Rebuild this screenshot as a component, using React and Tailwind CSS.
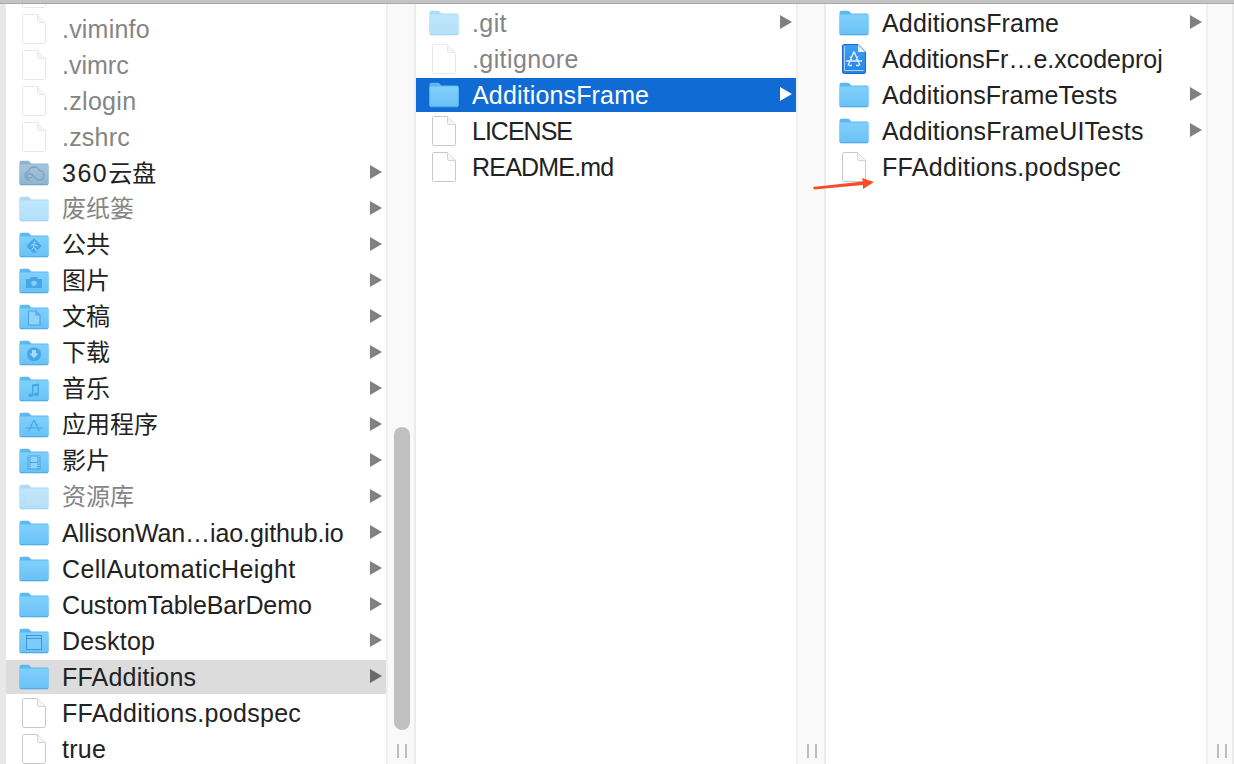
const FONT = 'font-["Liberation_Sans","Noto_Sans_CJK_SC",sans-serif]';

function Glyph({ type }) {
  const c = "#46a6e7";
  switch (type) {
    case "cloud":
      return <path d="M11 20c-3.200 0-5-2-5-4.300 0-2.200 1.600-3.800 3.600-4 .6-2.900 2.900-4.700 5.600-4.700 2.500 0 4.500 1.500 5.300 3.700 2.500 0 4.500 2 4.500 4.600 0 2.700-2 4.700-4.500 4.700-4.500 0-6-6.500-10-6.500-1.700 0-2.800 1-2.800 2.200 0 1.300 1.100 2.200 2.800 2.200 1.600 0 2.600-.8 3.500-1.800" fill="none" stroke="#7ba3c2" strokeWidth="1.300" />;
    case "public":
      return <g><rect x="9.500" y="8.500" width="11" height="11" rx="1.500" transform="rotate(45 15 14)" fill={c} /><circle cx="15.500" cy="10.500" r="1" fill="#a5dcfb" /><path d="M12 13.500l3-1.500 2 1.500 2 .5M15 12.500l-.5 3-2 2.500M14.500 15.500l2.500 1.500v2" stroke="#a5dcfb" strokeWidth="1" fill="none" /></g>;
    case "camera":
      return <g><path d="M7 11h4l1-2h6l1 2h4v9H7z" fill={c} /><circle cx="15" cy="15.300" r="3.200" fill="#86cef8" stroke={c} /></g>;
    case "doc":
      return <path d="M9.500 7h7.500l4 4v10H9.500z M17 7v4h4" fill="#8fd3f9" stroke={c} strokeWidth="1.100" />;
    case "down":
      return <g><circle cx="15" cy="14.300" r="7" fill={c} /><path d="M13 10h4v3.500h2.500l-4.500 4.700-4.500-4.700H13z" fill="#a5dcfb" /></g>;
    case "music":
      return <g fill={c}><path d="M13 8.500l7-1v10h-1.400V10l-4.200.6V19H13z" /><ellipse cx="11.800" cy="19.300" rx="2.500" ry="1.800" /><ellipse cx="17.500" cy="18.200" rx="2.500" ry="1.800" /></g>;
    case "apps":
      return <path d="M15 8l-5.500 11.500M15 8l5.500 11.500M6.500 16h17M11.500 12l1.500 2.500M18.500 12l-1.500 2.500" stroke={c} strokeWidth="1.100" fill="none" />;
    case "film":
      return <g><rect x="8.500" y="7.500" width="13" height="14" fill={c} /><rect x="11.500" y="8.500" width="7" height="5.500" fill="#8fd3f9" /><rect x="11.500" y="15" width="7" height="5.500" fill="#8fd3f9" /><path d="M10 8v13M20 8v13" stroke="#a5dcfb" strokeWidth="1.200" strokeDasharray="1.200 1" /></g>;
    case "bank":
      return <g fill="#8cc4e6"><path d="M15 7.500l7.500 3.500H7.500z" /><rect x="9" y="12" width="1.800" height="6" /><rect x="12.500" y="12" width="1.800" height="6" /><rect x="16" y="12" width="1.800" height="6" /><rect x="19.300" y="12" width="1.800" height="6" /><rect x="7.500" y="19" width="15" height="1.600" /></g>;
    case "desktop":
      return <g><rect x="7.500" y="7.500" width="15" height="14" fill="#7ccbf8" stroke="#3d97d8" strokeWidth="1" /><path d="M8 10.500h14" stroke="#3d97d8" strokeWidth="1" /></g>;
    default:
      return null;
  }
}

function Folder({ glyph, variant = "blue", dim }) {
  const p =
    variant === "cloud"
      ? { back: "#8fb4cf", top: "#a5c4da", bot: "#8fb5d2", edge: "#7ba3c2" }
      : { back: "#5db8ef", top: "#80d0fb", bot: "#69c2f6", edge: "#54abe0" };
  return (
    <svg width="30" height="26" viewBox="0 0 30 26" className={`shrink-0 ${dim ? "opacity-50" : ""}`}>
      <defs>
        <linearGradient id={`f-${variant}`} x1="0" y1="0" x2="0" y2="1">
          <stop offset="0" stopColor={p.top} />
          <stop offset="1" stopColor={p.bot} />
        </linearGradient>
      </defs>
      <path d="M.5 3C.5 1.500 1.300.8 2.500.8h6.200c1 0 1.600.4 2.200 1.100l1.500 1.700h15.400c1 0 1.700.7 1.700 1.700v18.200c0 1-.7 1.700-1.700 1.700H2.200c-1 0-1.700-.7-1.700-1.700z" fill={p.back} />
      <path d="M.5 5.700c0-.8.6-1.200 1.200-1.200h26.600c.7 0 1.200.5 1.200 1.200V23c0 .9-.5 1.400-1.400 1.400H1.900C1 24.400.5 23.900.5 23z" fill={`url(#f-${variant})`} />
      <path d="M1 24.600h28" stroke={p.edge} strokeWidth="1" />
      {glyph && <Glyph type={glyph} />}
    </svg>
  );
}

function FileIcon({ dim }) {
  return (
    <svg width="24" height="30" viewBox="0 0 24 30" className="shrink-0 ml-[3px]">
      <path d="M.5 2C.5 1 1 .5 2 .5h13.500l8 8V28c0 1-.5 1.500-1.500 1.500H2C1 29.500.5 29 .5 28z" fill="#fff" stroke={dim ? "#e8e8e8" : "#c8c8c8"} />
      <path d="M15.500.5V7c0 1 .5 1.500 1.500 1.500h6.500" fill="#f5f5f5" stroke={dim ? "#e8e8e8" : "#d4d4d4"} />
    </svg>
  );
}

function XcodeIcon() {
  return (
    <svg width="24" height="30" viewBox="0 0 24 30" className="shrink-0 ml-[3px]">
      <defs>
        <linearGradient id="xc" x1="0" y1="0" x2="0" y2="1">
          <stop offset="0" stopColor="#3d9ff2" />
          <stop offset="1" stopColor="#2384e6" />
        </linearGradient>
      </defs>
      <path d="M.5 2C.5 1 1 .5 2 .5h14l7.500 7.500V28c0 1-.5 1.500-1.500 1.500H2C1 29.500.5 29 .5 28z" fill="url(#xc)" stroke="#1c69c8" />
      <path d="M16 .8V8h7.200z" fill="#e6f0fb" />
      <path d="M2.500 2.500v24h19" fill="none" stroke="#a9d3f8" strokeWidth="1" />
      <path d="M12 7.500L6 21.500M12 7.500l6 14M4 17h16M8 12.500l2 3.500M16 12.500l-2 3.500M7 21.500h3M14 21.500h3" stroke="#e3f0fd" strokeWidth="1.300" fill="none" />
    </svg>
  );
}

function Arrow({ light, dark }) {
  return (
    <svg width="12" height="14" viewBox="0 0 12 14" className="shrink-0">
      <path d="M0 0L12 7 0 14z" fill={light ? "#fff" : dark ? "#6a6a6a" : "#808080"} />
    </svg>
  );
}

function Row({ icon, name, dim, arrow, sel, focus, t = "text-[25px] tracking-[0.2px]" }) {
  const bg = focus ? "bg-[#106bd4]" : sel ? "bg-[#dcdcdc]" : "";
  const fg = focus ? "text-white" : dim ? "text-[#858585]" : "text-[#222222]";
  return (
    <div className="h-[36px] shrink-0">
      <div className={`h-[34px] flex items-center pl-[13px] pr-[4px] ${bg}`}>
        <span className="w-[43px] shrink-0 flex items-center -mt-[1px]">{icon}</span>
        <span className={`flex-1 leading-[34px] whitespace-nowrap ${t} ${fg}`}>{name}</span>
        {arrow && <span className="-mt-[2px]"><Arrow light={focus} dark={sel} /></span>}
      </div>
    </div>
  );
}

function Gutter({ thumb, width = "w-[30px]" }) {
  return (
    <div className={`${width} shrink-0 relative bg-[#f9f9f9] border-l-2 border-l-[#efefef] border-r-2 border-r-[#ebebeb]`}>
      {thumb && <div className="absolute left-[6px] top-[423px] w-[16px] h-[303px] rounded-full bg-[#c0c0c0]" />}
      <div className="absolute bottom-[6px] left-[9px] flex gap-[6px]">
        <div className="w-[2px] h-[14px] bg-[#bdbdbd]" />
        <div className="w-[2px] h-[14px] bg-[#bdbdbd]" />
      </div>
    </div>
  );
}

const F = (g, v) => <Folder glyph={g} variant={v} />;
const D = (g) => <Folder glyph={g} dim />;
const CJK = "text-[24px]";

const col1 = [
  { icon: <FileIcon dim />, name: "", dim: true },
  { icon: <FileIcon dim />, name: ".viminfo", dim: true },
  { icon: <FileIcon dim />, name: ".vimrc", dim: true, t: "text-[25px] tracking-[0px]" },
  { icon: <FileIcon dim />, name: ".zlogin", dim: true, t: "text-[25px] tracking-[0.3px]" },
  { icon: <FileIcon dim />, name: ".zshrc", dim: true },
  { icon: F("cloud", "cloud"), name: <><span className="text-[25px] tracking-[1.5px]">360</span>云盘</>, arrow: true, t: CJK },
  { icon: D(), name: "废纸篓", dim: true, arrow: true, t: CJK },
  { icon: F("public"), name: "公共", arrow: true, t: CJK },
  { icon: F("camera"), name: "图片", arrow: true, t: CJK },
  { icon: F("doc"), name: "文稿", arrow: true, t: CJK },
  { icon: F("down"), name: "下载", arrow: true, t: CJK },
  { icon: F("music"), name: "音乐", arrow: true, t: CJK },
  { icon: F("apps"), name: "应用程序", arrow: true, t: CJK },
  { icon: F("film"), name: "影片", arrow: true, t: CJK },
  { icon: D("bank"), name: "资源库", dim: true, arrow: true, t: CJK },
  { icon: F(), name: "AllisonWan…iao.github.io", arrow: true, t: "text-[25px] tracking-[-0.1px]" },
  { icon: F(), name: "CellAutomaticHeight", arrow: true, t: "text-[25px] tracking-[0.37px]" },
  { icon: F(), name: "CustomTableBarDemo", arrow: true, t: "text-[25px] tracking-[-0.1px]" },
  { icon: F("desktop"), name: "Desktop", arrow: true },
  { icon: F(), name: "FFAdditions", arrow: true, sel: true },
  { icon: <FileIcon />, name: "FFAdditions.podspec", t: "text-[25px] tracking-[0.3px]" },
  { icon: <FileIcon />, name: "true", t: "text-[25px] tracking-[0.3px]" },
];

const col2 = [
  { icon: D(), name: ".git", dim: true, arrow: true, t: "text-[25px] tracking-[0.4px]" },
  { icon: <FileIcon dim />, name: ".gitignore", dim: true, t: "text-[25px] tracking-[0.4px]" },
  { icon: F(), name: "AdditionsFrame", arrow: true, focus: true, t: "text-[25px] tracking-[0.15px]" },
  { icon: <FileIcon />, name: "LICENSE", t: "text-[25px] tracking-[-1px]" },
  { icon: <FileIcon />, name: "README.md", t: "text-[25px] tracking-[-0.8px]" },
];

const col3 = [
  { icon: F(), name: "AdditionsFrame", arrow: true, t: "text-[25px] tracking-[0.15px]" },
  { icon: <XcodeIcon />, name: "AdditionsFr…e.xcodeproj", t: "text-[25px] tracking-[0px]" },
  { icon: F(), name: "AdditionsFrameTests", arrow: true, t: "text-[25px] tracking-[0.1px]" },
  { icon: F(), name: "AdditionsFrameUITests", arrow: true, t: "text-[25px] tracking-[0.15px]" },
  { icon: <FileIcon />, name: "FFAdditions.podspec", t: "text-[25px] tracking-[0.3px]" },
];

export default function App() {
  return (
    <div className={`w-[1234px] h-[764px] overflow-hidden relative bg-white flex flex-col ${FONT}`}>
      <div className="h-[4px] shrink-0 bg-[#c4c4c4] border-b border-b-[#a8a8a8] relative z-10" />
      <div className="flex-1 flex min-h-0">
        <div className="w-[6px] shrink-0 bg-[#e6e8e9]" />
        <div className="w-[380px] shrink-0 flex flex-col -mt-[28px]">
          {col1.map((r, i) => <Row key={i} {...r} />)}
        </div>
        <Gutter thumb />
        <div className="w-[380px] shrink-0 flex flex-col pt-[2px]">
          {col2.map((r, i) => <Row key={i} {...r} />)}
        </div>
        <Gutter />
        <div className="w-[380px] shrink-0 flex flex-col pt-[2px]">
          {col3.map((r, i) => <Row key={i} {...r} />)}
        </div>
        <Gutter width="w-[28px]" />
      </div>
      <svg className="absolute left-[812px] top-[176px]" width="64" height="16" viewBox="0 0 64 16">
        <path d="M1 11L51 5.500 50 2 62 6 51 13 51 9 2 13.500z" fill="#fb4a26" />
      </svg>
    </div>
  );
}
